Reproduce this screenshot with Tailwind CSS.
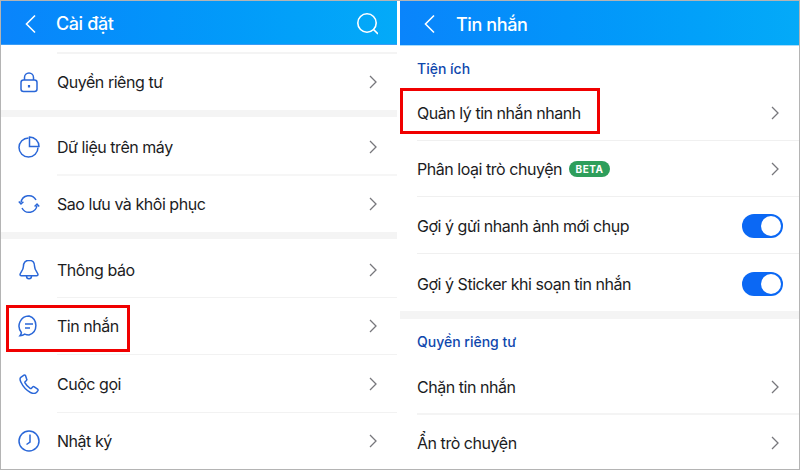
<!DOCTYPE html>
<html lang="vi">
<head>
  <meta charset="UTF-8" />
  <title>Cài đặt - Tin nhắn</title>
  <script src="https://cdn.jsdelivr.net/npm/@tailwindcss/browser@4"></script>
</head>
<body class="w-[800px] h-[470px] overflow-hidden bg-white font-['Inter','Noto_Sans',sans-serif] text-[16px] tracking-[-0.46px] text-[#1c1c1e]">
<div class="flex h-[470px] border-t border-b border-[#b4b4b4]">

  <!-- ===== Cai dat ===== -->
  <div class="relative w-[397px] shrink-0 border-l border-[#b4b4b4]">
    <div class="flex items-center h-[44px] pt-[2px] bg-gradient-to-r from-[#0a84fb] to-[#04aaf8] text-white border-b border-[#3b9cf5]">
      <svg class="ml-[23px] w-[14px] h-[20px]" viewBox="0 0 14 20" fill="none" stroke="currentColor" stroke-width="1.6"><path d="M11 1.5 2.500 10 11 18.500"/></svg>
      <span class="ml-[18px] text-[18px] font-medium tracking-[-0.4px]">Cài đặt</span>
      <svg class="ml-auto mr-[19px] w-[22px] h-[22px]" viewBox="0 0 22 22" fill="none" stroke="currentColor" stroke-width="1.6"><circle cx="11" cy="10" r="9.200"/><path d="m17.500 16.500 4.500 4.500"/></svg>
    </div>

    <div class="h-[7px]"></div>
    <div class="ml-[56px] border-t-2 border-[#f4f4f4]"></div>
    <div class="flex items-center h-[56px]">
      <div class="w-[56px] flex justify-center">
        <svg class="w-[20px] h-[21px] text-[#2a67d8]" viewBox="0 0 20 21" fill="none" stroke="currentColor" stroke-width="1.5"><rect x="2" y="8" width="16" height="11.500" rx="2.500"/><path d="M5.500 8V5.500a4.500 4.500 0 0 1 9 0V8"/><path d="M10 13v2.500" stroke-width="2.200"/></svg>
      </div>
      <span>Quyền riêng tư</span>
      <svg class="ml-auto mr-[20px] w-[8px] h-[14px] text-[#77777c]" viewBox="0 0 8 14" fill="none" stroke="currentColor" stroke-width="1.300"><path d="m1 1 6 6-6 6"/></svg>
    </div>
    <div class="h-[7px] bg-[#f4f4f4]"></div>

    <div class="flex items-center h-[57px] pt-[2px]">
      <div class="w-[56px] flex justify-center">
        <svg class="w-[22px] h-[22px] text-[#2a67d8]" viewBox="0 0 22 22" fill="none" stroke="currentColor" stroke-width="1.500"><path d="M10.500 2A9.500 9.500 0 1 0 20 11.500"/><path d="M11.500 1A9.500 9.500 0 0 1 21 10.500H11.500z"/></svg>
      </div>
      <span>Dữ liệu trên máy</span>
      <svg class="ml-auto mr-[20px] w-[8px] h-[14px] text-[#77777c]" viewBox="0 0 8 14" fill="none" stroke="currentColor" stroke-width="1.300"><path d="m1 1 6 6-6 6"/></svg>
    </div>
    <div class="ml-[56px] border-t-2 border-[#f6f6f6]"></div>
    <div class="flex items-center h-[56px]">
      <div class="w-[56px] flex justify-center">
        <svg class="w-[22px] h-[20px] text-[#2a67d8]" viewBox="0 0 22 20" fill="none" stroke="currentColor" stroke-width="1.500"><path d="M3 8.500a8 8 0 0 1 15-2.500"/><path d="M19 11.500a8 8 0 0 1-15 2.500"/><path d="M.8 7.500 3 10l2.400-2.200"/><path d="M16.600 12.500 19 10l2.200 2.500"/></svg>
      </div>
      <span>Sao lưu và khôi phục</span>
      <svg class="ml-auto mr-[20px] w-[8px] h-[14px] text-[#77777c]" viewBox="0 0 8 14" fill="none" stroke="currentColor" stroke-width="1.300"><path d="m1 1 6 6-6 6"/></svg>
    </div>
    <div class="h-[7px] bg-[#f4f4f4]"></div>

    <div class="flex items-center h-[58px] pt-[3px]">
      <div class="w-[56px] flex justify-center">
        <svg class="w-[20px] h-[21px] text-[#2a67d8]" viewBox="0 0 20 21" fill="none" stroke="currentColor" stroke-width="1.500"><path d="M10 1.200c-3.600 0-5.600 2.700-5.600 6.200 0 4-3.400 6.500-3.400 8.200 0 .7.500 1.200 1.300 1.200h15.400c.8 0 1.300-.5 1.300-1.200 0-1.700-3.400-4.200-3.400-8.200 0-3.500-2-6.200-5.600-6.200z"/><path d="M7.500 17c0 1.600 1 2.800 2.500 2.800s2.500-1.200 2.500-2.800"/></svg>
      </div>
      <span>Thông báo</span>
      <svg class="ml-auto mr-[20px] w-[8px] h-[14px] text-[#77777c]" viewBox="0 0 8 14" fill="none" stroke="currentColor" stroke-width="1.300"><path d="m1 1 6 6-6 6"/></svg>
    </div>
    <div class="ml-[56px] border-t border-[#f2f2f2]"></div>
    <div class="flex items-center h-[56px]">
      <div class="w-[56px] flex justify-center">
        <svg class="w-[22px] h-[22px] text-[#2a67d8]" viewBox="0 0 22 22" fill="none" stroke="currentColor" stroke-width="1.500"><path d="M11 1a10 10 0 0 1 0 19c-1.600 0-3-.3-4.300-.9-1.200.9-2.900 1.500-4.700 1.600.8-1 1.300-2 1.400-3.300A10 10 0 0 1 11 1z"/><path d="M7 9h8M7 13h5"/></svg>
      </div>
      <span>Tin nhắn</span>
      <svg class="ml-auto mr-[20px] w-[8px] h-[14px] text-[#77777c]" viewBox="0 0 8 14" fill="none" stroke="currentColor" stroke-width="1.300"><path d="m1 1 6 6-6 6"/></svg>
    </div>
    <div class="ml-[56px] border-t border-[#f2f2f2]"></div>
    <div class="flex items-center h-[57px]">
      <div class="w-[56px] flex justify-center">
        <svg class="w-[20px] h-[20px] text-[#2a67d8]" viewBox="0 0 20 20" fill="none" stroke="currentColor" stroke-width="1.500"><path d="M5 1.200 1.800 3.300C.6 4.300 1 6.300 2 8.300c2.200 4.700 5.300 8 9.500 10.200 2.300 1.100 4.700 1.300 6.200-.2l1.200-1.700c.3-.6.200-1.100-.3-1.500l-3.300-2.300c-.6-.4-1.200-.3-1.700.2l-1.100 1.200c-.4.400-.9.400-1.400.1-2.100-1.300-3.900-3.200-5.100-5.400-.2-.5-.2-1 .2-1.300l1.200-1.100c.5-.5.600-1.100.2-1.700L6.500 1.500C6.100 1 5.500.9 5 1.200z"/></svg>
      </div>
      <span>Cuộc gọi</span>
      <svg class="ml-auto mr-[20px] w-[8px] h-[14px] text-[#77777c]" viewBox="0 0 8 14" fill="none" stroke="currentColor" stroke-width="1.300"><path d="m1 1 6 6-6 6"/></svg>
    </div>
    <div class="ml-[56px] border-t border-[#f2f2f2]"></div>
    <div class="flex items-center h-[56px]">
      <div class="w-[56px] flex justify-center">
        <svg class="w-[22px] h-[22px] text-[#2a67d8]" viewBox="0 0 22 22" fill="none" stroke="currentColor" stroke-width="1.500"><circle cx="11" cy="11" r="10"/><path d="M12 4.500v7.500l-3.500 2.500"/></svg>
      </div>
      <span>Nhật ký</span>
      <svg class="ml-auto mr-[20px] w-[8px] h-[14px] text-[#77777c]" viewBox="0 0 8 14" fill="none" stroke="currentColor" stroke-width="1.300"><path d="m1 1 6 6-6 6"/></svg>
    </div>

    <div class="absolute left-[5px] top-[304px] w-[124px] h-[47px] border-[3px] border-[#f00000]"></div>
  </div>

  <div class="w-[3px] shrink-0"></div>

  <!-- ===== Tin nhan ===== -->
  <div class="relative flex-1 border-r border-[#b4b4b4]">
    <div class="flex items-center h-[45px] pt-[2px] bg-gradient-to-r from-[#0a84fb] to-[#04aaf8] text-white border-b border-[#a8dcfa]">
      <svg class="ml-[23px] w-[14px] h-[20px]" viewBox="0 0 14 20" fill="none" stroke="currentColor" stroke-width="1.600"><path d="M11 1.500 2.500 10 11 18.500"/></svg>
      <span class="ml-[19px] text-[18px] font-medium tracking-[-0.4px]">Tin nhắn</span>
    </div>

    <div class="flex items-center h-[44px] pl-[17px] text-[14px] font-medium tracking-normal text-[#0f47ad]">Tiện ích</div>
    <div class="flex items-center h-[50px] pb-[4px] pl-[17px]">
      <span>Quản lý tin nhắn nhanh</span>
      <svg class="ml-auto mr-[20px] w-[8px] h-[14px] text-[#77777c]" viewBox="0 0 8 14" fill="none" stroke="currentColor" stroke-width="1.300"><path d="m1 1 6 6-6 6"/></svg>
    </div>
    <div class="ml-[17px] border-t border-[#f0f0f0]"></div>
    <div class="flex items-center h-[55px] pt-[1px] pl-[17px]">
      <span>Phân loại trò chuyện</span>
      <span class="ml-[7px] flex items-center h-[16px] px-[6.500px] rounded-full bg-[#2e9e5b] text-white text-[10px] font-bold tracking-[0.5px]">BETA</span>
      <svg class="ml-auto mr-[20px] w-[8px] h-[14px] text-[#77777c]" viewBox="0 0 8 14" fill="none" stroke="currentColor" stroke-width="1.300"><path d="m1 1 6 6-6 6"/></svg>
    </div>
    <div class="ml-[17px] border-t border-[#f0f0f0]"></div>
    <div class="flex items-center h-[56px] pt-[2px] pl-[17px]">
      <span>Gợi ý gửi nhanh ảnh mới chụp</span>
      <span class="ml-auto mr-[16px] flex justify-end items-center w-[41px] h-[24px] p-[2px] rounded-full bg-[#0b68f4]"><span class="w-[20px] h-[20px] rounded-full bg-white"></span></span>
    </div>
    <div class="ml-[17px] border-t border-[#f0f0f0]"></div>
    <div class="flex items-center h-[57px] pt-[2px] pl-[17px]">
      <span>Gợi ý Sticker khi soạn tin nhắn</span>
      <span class="ml-auto mr-[16px] flex justify-end items-center w-[41px] h-[24px] p-[2px] rounded-full bg-[#0b68f4]"><span class="w-[20px] h-[20px] rounded-full bg-white"></span></span>
    </div>
    <div class="h-[8px] bg-[#f4f4f4]"></div>

    <div class="flex items-center h-[45px] pl-[17px] text-[14px] font-medium tracking-normal text-[#0f47ad]">Quyền riêng tư</div>
    <div class="flex items-center h-[49px] pb-[4px] pl-[17px]">
      <span>Chặn tin nhắn</span>
      <svg class="ml-auto mr-[20px] w-[8px] h-[14px] text-[#77777c]" viewBox="0 0 8 14" fill="none" stroke="currentColor" stroke-width="1.300"><path d="m1 1 6 6-6 6"/></svg>
    </div>
    <div class="ml-[17px] border-t-2 border-[#f4f4f4]"></div>
    <div class="flex items-center h-[56px] pl-[17px]">
      <span>Ẩn trò chuyện</span>
      <svg class="ml-auto mr-[20px] w-[8px] h-[14px] text-[#77777c]" viewBox="0 0 8 14" fill="none" stroke="currentColor" stroke-width="1.300"><path d="m1 1 6 6-6 6"/></svg>
    </div>

    <div class="absolute left-[0px] top-[87px] w-[200px] h-[46px] border-[3px] border-[#f00000]"></div>
  </div>
</div>
</body>
</html>
